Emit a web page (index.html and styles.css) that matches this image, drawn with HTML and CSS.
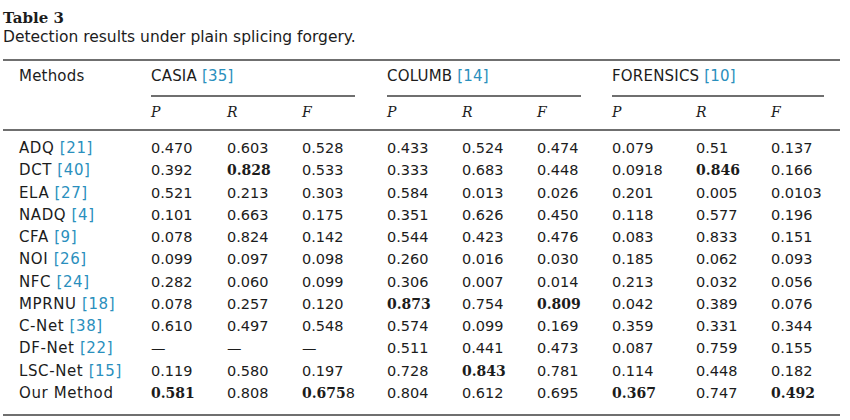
FILE: index.html
```html
<!DOCTYPE html>
<html>
<head>
<meta charset="utf-8">
<link rel="stylesheet" href="styles.css">
</head>
<body>
<div class="page">
  <div class="title">Table 3</div>
  <div class="caption">Detection results under plain splicing forgery.</div>
  <table class="results">
    <colgroup>
      <col class="c-method">
      <col class="c76"><col class="c75"><col class="c85">
      <col class="c75"><col class="c75"><col class="c75">
      <col class="c84"><col class="c75"><col class="c69">
    </colgroup>
    <thead>
      <tr class="group-row">
        <th class="method-head">Methods</th>
        <th colspan="3" class="group g-mid"><div class="group-label">CASIA <a>[35]</a></div></th>
        <th colspan="3" class="group g-mid2"><div class="group-label">COLUMB <a>[14]</a></div></th>
        <th colspan="3" class="group g-last"><div class="group-label">FORENSICS <a>[10]</a></div></th>
      </tr>
      <tr class="metric-row">
        <th></th>
        <th>P</th><th>R</th><th>F</th>
        <th>P</th><th>R</th><th>F</th>
        <th>P</th><th>R</th><th>F</th>
      </tr>
    </thead>
    <tbody>
      <tr><td class="m">ADQ <a>[21]</a></td><td>0.470</td><td>0.603</td><td>0.528</td><td>0.433</td><td>0.524</td><td>0.474</td><td>0.079</td><td>0.51</td><td>0.137</td></tr>
      <tr><td class="m">DCT <a>[40]</a></td><td>0.392</td><td><b>0.828</b></td><td>0.533</td><td>0.333</td><td>0.683</td><td>0.448</td><td>0.0918</td><td><b>0.846</b></td><td>0.166</td></tr>
      <tr><td class="m">ELA <a>[27]</a></td><td>0.521</td><td>0.213</td><td>0.303</td><td>0.584</td><td>0.013</td><td>0.026</td><td>0.201</td><td>0.005</td><td>0.0103</td></tr>
      <tr><td class="m">NADQ <a>[4]</a></td><td>0.101</td><td>0.663</td><td>0.175</td><td>0.351</td><td>0.626</td><td>0.450</td><td>0.118</td><td>0.577</td><td>0.196</td></tr>
      <tr><td class="m">CFA <a>[9]</a></td><td>0.078</td><td>0.824</td><td>0.142</td><td>0.544</td><td>0.423</td><td>0.476</td><td>0.083</td><td>0.833</td><td>0.151</td></tr>
      <tr><td class="m">NOI <a>[26]</a></td><td>0.099</td><td>0.097</td><td>0.098</td><td>0.260</td><td>0.016</td><td>0.030</td><td>0.185</td><td>0.062</td><td>0.093</td></tr>
      <tr><td class="m">NFC <a>[24]</a></td><td>0.282</td><td>0.060</td><td>0.099</td><td>0.306</td><td>0.007</td><td>0.014</td><td>0.213</td><td>0.032</td><td>0.056</td></tr>
      <tr><td class="m">MPRNU <a>[18]</a></td><td>0.078</td><td>0.257</td><td>0.120</td><td><b>0.873</b></td><td>0.754</td><td><b>0.809</b></td><td>0.042</td><td>0.389</td><td>0.076</td></tr>
      <tr><td class="m">C-Net <a>[38]</a></td><td>0.610</td><td>0.497</td><td>0.548</td><td>0.574</td><td>0.099</td><td>0.169</td><td>0.359</td><td>0.331</td><td>0.344</td></tr>
      <tr><td class="m">DF-Net <a>[22]</a></td><td>—</td><td>—</td><td>—</td><td>0.511</td><td>0.441</td><td>0.473</td><td>0.087</td><td>0.759</td><td>0.155</td></tr>
      <tr><td class="m">LSC-Net <a>[15]</a></td><td>0.119</td><td>0.580</td><td>0.197</td><td>0.728</td><td><b>0.843</b></td><td>0.781</td><td>0.114</td><td>0.448</td><td>0.182</td></tr>
      <tr><td class="m">Our Method</td><td><b>0.581</b></td><td>0.808</td><td><b>0.675</b>8</td><td>0.804</td><td>0.612</td><td>0.695</td><td><b>0.367</b></td><td>0.747</td><td><b>0.492</b></td></tr>
    </tbody>
  </table>
</div>
</body>
</html>
```

FILE: styles.css
```css
html, body {
  margin: 0;
  padding: 0;
  background: #ffffff;
}

body {
  font-family: "DejaVu Sans", sans-serif;
  color: #1c1c1c;
  font-size: 14.5px;
}

.page {
  padding: 10px 10px 0 3px;
}

.title {
  font-family: "DejaVu Serif", serif;
  font-weight: bold;
  font-size: 15px;
  line-height: 17px;
}

.caption {
  font-size: 15.5px;
  line-height: 20px;
}

.results {
  margin-top: 12px;
  width: 837px;
  table-layout: fixed;
  border-collapse: collapse;
  border-top: 2px solid #6f6f6f;
  border-bottom: 2px solid #6f6f6f;
}

.c-method { width: 148px; }
.c76 { width: 76px; }
.c75 { width: 75px; }
.c85 { width: 85px; }
.c84 { width: 84px; }
.c69 { width: 69px; }

.results th,
.results td {
  padding: 0;
  text-align: left;
  font-weight: normal;
  white-space: nowrap;
}

.results a {
  color: #2a8fbd;
  text-decoration: none;
}

.results b {
  font-family: "DejaVu Serif", serif;
  font-weight: bold;
  font-size: 14px;
  line-height: 1;
}

.method-head {
  padding-left: 16px !important;
  vertical-align: top;
  padding-top: 4px !important;
  line-height: 22px;
  font-size: 15px;
  letter-spacing: 0.2px;
}

.group {
  padding-top: 4px !important;
  vertical-align: top;
}

.g-mid { padding-right: 32px !important; }
.g-mid2 { padding-right: 31px !important; }
.g-last { padding-right: 16px !important; }

.group-label {
  font-size: 15px;
  letter-spacing: 0.2px;
  line-height: 22px;
  padding-bottom: 8px;
  border-bottom: 2px solid #6f6f6f;
}

.metric-row th {
  font-family: "DejaVu Serif", serif;
  font-style: italic;
  font-size: 14px;
  line-height: 22px;
  padding-top: 4px;
  padding-bottom: 6px;
  border-bottom: 2px solid #6f6f6f;
}

.results tbody td {
  line-height: 22.27px;
  height: 22.27px;
}

.results td.m {
  padding-left: 16px;
  font-size: 15px;
  letter-spacing: 0.6px;
}

.results tbody tr:first-child td {
  padding-top: 6px;
}

.results tbody tr:last-child td {
  padding-bottom: 10px;
}
```
